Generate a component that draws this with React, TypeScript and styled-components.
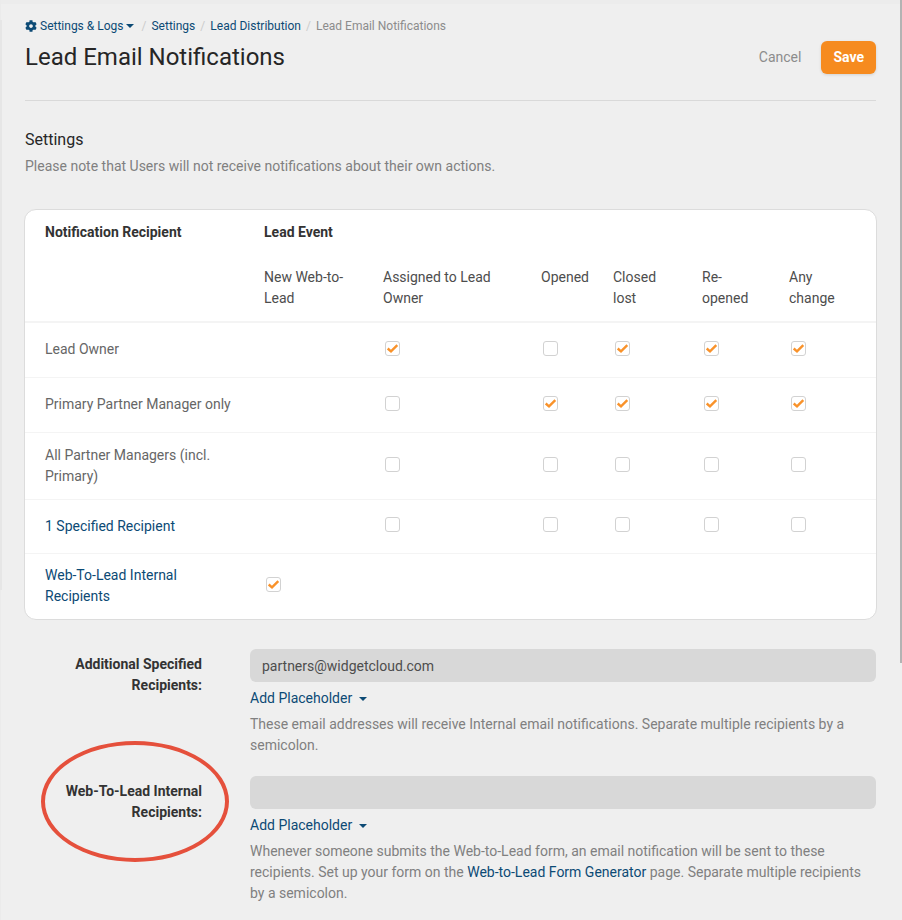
import React, { useState } from "react";
import styled, { createGlobalStyle } from "styled-components";
import { FaCog } from "react-icons/fa";

const GlobalStyle = createGlobalStyle`
  *, *::before, *::after { box-sizing: border-box; }
  html { scrollbar-width: none; }
  body {
    margin: 0;
    background: #efefef;
    color: #555;
    font-family: Roboto, "Liberation Sans", sans-serif;
    font-size: 14px;
    line-height: 21px;
  }
  button, input { font: inherit; }
`;

const Shell = styled.div`
  position: relative;
  min-height: 100vh;
  border-left: 1px solid #ebebeb;
`;

const EdgeShade = styled.div`
  position: absolute;
  left: -1px;
  top: 20px;
  width: 2px;
  height: 570px;
  background: #e6e6e6;
`;

const TopShade = styled.div`
  position: absolute;
  inset: 0 0 auto 0;
  height: 4px;
  background: #ececec;
`;

const ScrollThumb = styled.div`
  position: absolute;
  right: 0;
  top: 0;
  width: 2px;
  height: 663px;
  background: #b3b3b3;
`;

const Page = styled.main`
  padding: 16px 26px 16px 24px;
`;

const Crumbs = styled.nav`
  display: flex;
  align-items: center;
  font-size: 12px;
  line-height: 20px;
`;

const Slash = styled.span`
  width: 15px;
  text-align: center;
  color: #ccc;
`;

const Link = styled.a`
  color: #0c4a75;
  text-decoration: none;
`;

const MenuButton = styled.button<{ $gap: number }>`
  display: inline-flex;
  align-items: center;
  gap: ${(p) => p.$gap}px;
  padding: 0;
  border: 0;
  background: none;
  color: #0c4a75;
  cursor: pointer;
`;

const CrumbMenu = styled(MenuButton)`
  margin-right: 2px;
`;

const Current = styled.span`
  color: #8c8c8c;
`;

const TitleBar = styled.header`
  display: flex;
  align-items: center;
  justify-content: space-between;
  height: 65px;
  padding-bottom: 22px;
  border-bottom: 1px solid #d9d9d9;
`;

const Title = styled.h1`
  margin: 0;
  font-size: 24px;
  line-height: 32px;
  font-weight: 400;
  color: #262626;
`;

const Actions = styled.div`
  display: flex;
  align-items: center;
  gap: 20px;
`;

const CancelButton = styled.button`
  padding: 0;
  border: 0;
  background: none;
  color: #8c8c8c;
`;

const SaveButton = styled.button`
  height: 33px;
  padding: 0 12px;
  border: 0;
  border-radius: 6px;
  background: #f68b1f;
  color: #fff;
  font-weight: 700;
  box-shadow: 0 1px 3px rgba(0, 0, 0, 0.12);
`;

const SectionTitle = styled.h2`
  margin: 27px 0 4px;
  font-size: 16px;
  line-height: 24px;
  font-weight: 400;
  color: #262626;
`;

const Note = styled.p`
  margin: 0;
  color: #808080;
`;

const Card = styled.div`
  margin: 32px -1px 0;
  border: 1px solid #dcdcdc;
  border-radius: 12px;
  background: #fff;
  overflow: hidden;
`;

const Matrix = styled.table`
  width: 100%;
  table-layout: fixed;
  border-collapse: collapse;
`;

const GroupHead = styled.th`
  padding: 12px 8px 12px 20px;
  text-align: left;
  font-weight: 700;
  color: #333;
`;

const EventHead = styled.th`
  padding: 12px 8px 12px 20px;
  text-align: left;
  vertical-align: top;
  font-weight: 400;
  color: #4d4d4d;
  &:last-child { padding-right: 20px; }
`;

const HeadRow = styled.tr<{ $ruled?: boolean }>`
  border-bottom: ${(p) => (p.$ruled ? "2px solid #f4f4f4" : "0")};
`;

const Row = styled.tr<{ $height: number }>`
  height: ${(p) => p.$height}px;
  border-bottom: 1px solid #f4f4f4;
  &:last-child { border-bottom: 0; }
`;

const Recipient = styled.th`
  padding: 0 8px 0 20px;
  text-align: left;
  font-weight: 400;
  color: #666;
`;

const Cell = styled.td`
  padding: 0 0 3px 22px;
`;

const TickLabel = styled.label`
  display: grid;
  width: 15px;
  height: 15px;
  & > * { grid-area: 1 / 1; }
`;

const TickInput = styled.input`
  appearance: none;
  width: 15px;
  height: 15px;
  margin: 0;
  border: 1px solid #d2d2d2;
  border-radius: 3px;
  background: #fff;
`;

const TickMark = styled.svg`
  width: 15px;
  height: 15px;
  pointer-events: none;
`;

const Form = styled.form`
  display: grid;
  gap: 20px;
  padding-top: 29px;
`;

const Field = styled.div`
  display: grid;
  grid-template-columns: 177px 1fr;
  column-gap: 48px;
`;

const LabelCell = styled.div`
  position: relative;
  padding: 5px 0 0 32px;
  text-align: right;
`;

const FieldLabel = styled.label`
  display: block;
  font-weight: 700;
  color: #333;
`;

const Highlight = styled.div`
  position: absolute;
  left: 16px;
  top: -35px;
  width: 188px;
  height: 121px;
  border: 4px solid #e5503c;
  border-radius: 50%;
  pointer-events: none;
`;

const TextInput = styled.input`
  display: block;
  width: 100%;
  height: 33px;
  padding: 0 12px;
  border: 0;
  border-radius: 6px;
  background: #d8d8d8;
  color: #4d4d4d;
`;

const Placeholder = styled.div`
  display: flex;
  margin: 6px 0 5px;
`;

const Caret = () => (
  <svg width="8" height="4" viewBox="0 0 8 4" aria-hidden="true">
    <path d="M0 0h8L4 4z" fill="currentColor" />
  </svg>
);

function Tick({ label, initial }: { label: string; initial: boolean }) {
  const [checked, setChecked] = useState(initial);
  return (
    <TickLabel>
      <TickInput
        type="checkbox"
        aria-label={label}
        checked={checked}
        onChange={(e) => setChecked(e.target.checked)}
      />
      {checked && (
        <TickMark viewBox="0 0 15 15" aria-hidden="true">
          <path d="M2.700 7.500L6 10.300L12.300 4.200" fill="none" stroke="#f9922a" strokeWidth="2.400" />
        </TickMark>
      )}
    </TickLabel>
  );
}

const columns = [219, 119, 158, 72, 89, 87, 107];
const events = ["New Web-to-Lead", "Assigned to Lead Owner", "Opened", "Closed lost", "Re-opened", "Any change"];

type RowData = { name: string; link?: boolean; height: number; ticks: (boolean | null)[] };
const rows: RowData[] = [
  { name: "Lead Owner", height: 55, ticks: [null, true, false, true, true, true] },
  { name: "Primary Partner Manager only", height: 55, ticks: [null, false, true, true, true, true] },
  { name: "All Partner Managers (incl. Primary)", height: 67, ticks: [null, false, false, false, false, false] },
  { name: "1 Specified Recipient", link: true, height: 54, ticks: [null, false, false, false, false, false] },
  { name: "Web-To-Lead Internal Recipients", link: true, height: 66, ticks: [true, null, null, null, null, null] },
];

function PlaceholderMenu() {
  return (
    <Placeholder>
      <MenuButton type="button" $gap={7}>
        Add Placeholder
        <Caret />
      </MenuButton>
    </Placeholder>
  );
}

export default function App() {
  return (
    <Shell>
      <GlobalStyle />
      <TopShade />
      <EdgeShade />
      <ScrollThumb />
      <Page>
        <Crumbs aria-label="Breadcrumb">
          <CrumbMenu type="button" $gap={3}>
            <FaCog size={12} aria-hidden="true" />
            Settings &amp; Logs
            <Caret />
          </CrumbMenu>
          <Slash>/</Slash>
          <Link href="#settings">Settings</Link>
          <Slash>/</Slash>
          <Link href="#distribution">Lead Distribution</Link>
          <Slash>/</Slash>
          <Current>Lead Email Notifications</Current>
        </Crumbs>
        <TitleBar>
          <Title>Lead Email Notifications</Title>
          <Actions>
            <CancelButton type="button">Cancel</CancelButton>
            <SaveButton type="submit" form="recipients">Save</SaveButton>
          </Actions>
        </TitleBar>
        <SectionTitle>Settings</SectionTitle>
        <Note>Please note that Users will not receive notifications about their own actions.</Note>
        <Card>
          <Matrix>
            <colgroup>
              {columns.map((w, i) => (
                <col key={i} width={w} />
              ))}
            </colgroup>
            <thead>
              <HeadRow>
                <GroupHead scope="col">Notification Recipient</GroupHead>
                <GroupHead scope="colgroup" colSpan={6}>Lead Event</GroupHead>
              </HeadRow>
              <HeadRow $ruled>
                <td />
                {events.map((e) => (
                  <EventHead key={e} scope="col">{e}</EventHead>
                ))}
              </HeadRow>
            </thead>
            <tbody>
              {rows.map((r) => (
                <Row key={r.name} $height={r.height}>
                  <Recipient scope="row">
                    {r.link ? <Link href="#recipients">{r.name}</Link> : r.name}
                  </Recipient>
                  {r.ticks.map((t, i) => (
                    <Cell key={events[i]}>
                      {t !== null && <Tick label={`${r.name}: ${events[i]}`} initial={t} />}
                    </Cell>
                  ))}
                </Row>
              ))}
            </tbody>
          </Matrix>
        </Card>
        <Form id="recipients" onSubmit={(e) => e.preventDefault()}>
          <Field>
            <LabelCell>
              <FieldLabel htmlFor="additional">Additional Specified Recipients:</FieldLabel>
            </LabelCell>
            <div>
              <TextInput id="additional" type="text" defaultValue="partners@widgetcloud.com" />
              <PlaceholderMenu />
              <Note>
                These email addresses will receive Internal email notifications. Separate multiple
                recipients by a semicolon.
              </Note>
            </div>
          </Field>
          <Field>
            <LabelCell>
              <FieldLabel htmlFor="internal">Web-To-Lead Internal Recipients:</FieldLabel>
              <Highlight />
            </LabelCell>
            <div>
              <TextInput id="internal" type="text" />
              <PlaceholderMenu />
              <Note>
                Whenever someone submits the Web-to-Lead form, an email notification will be sent to
                these recipients. Set up your form on the{" "}
                <Link href="#generator">Web-to-Lead Form Generator</Link> page. Separate multiple
                recipients by a semicolon.
              </Note>
            </div>
          </Field>
        </Form>
      </Page>
    </Shell>
  );
}
